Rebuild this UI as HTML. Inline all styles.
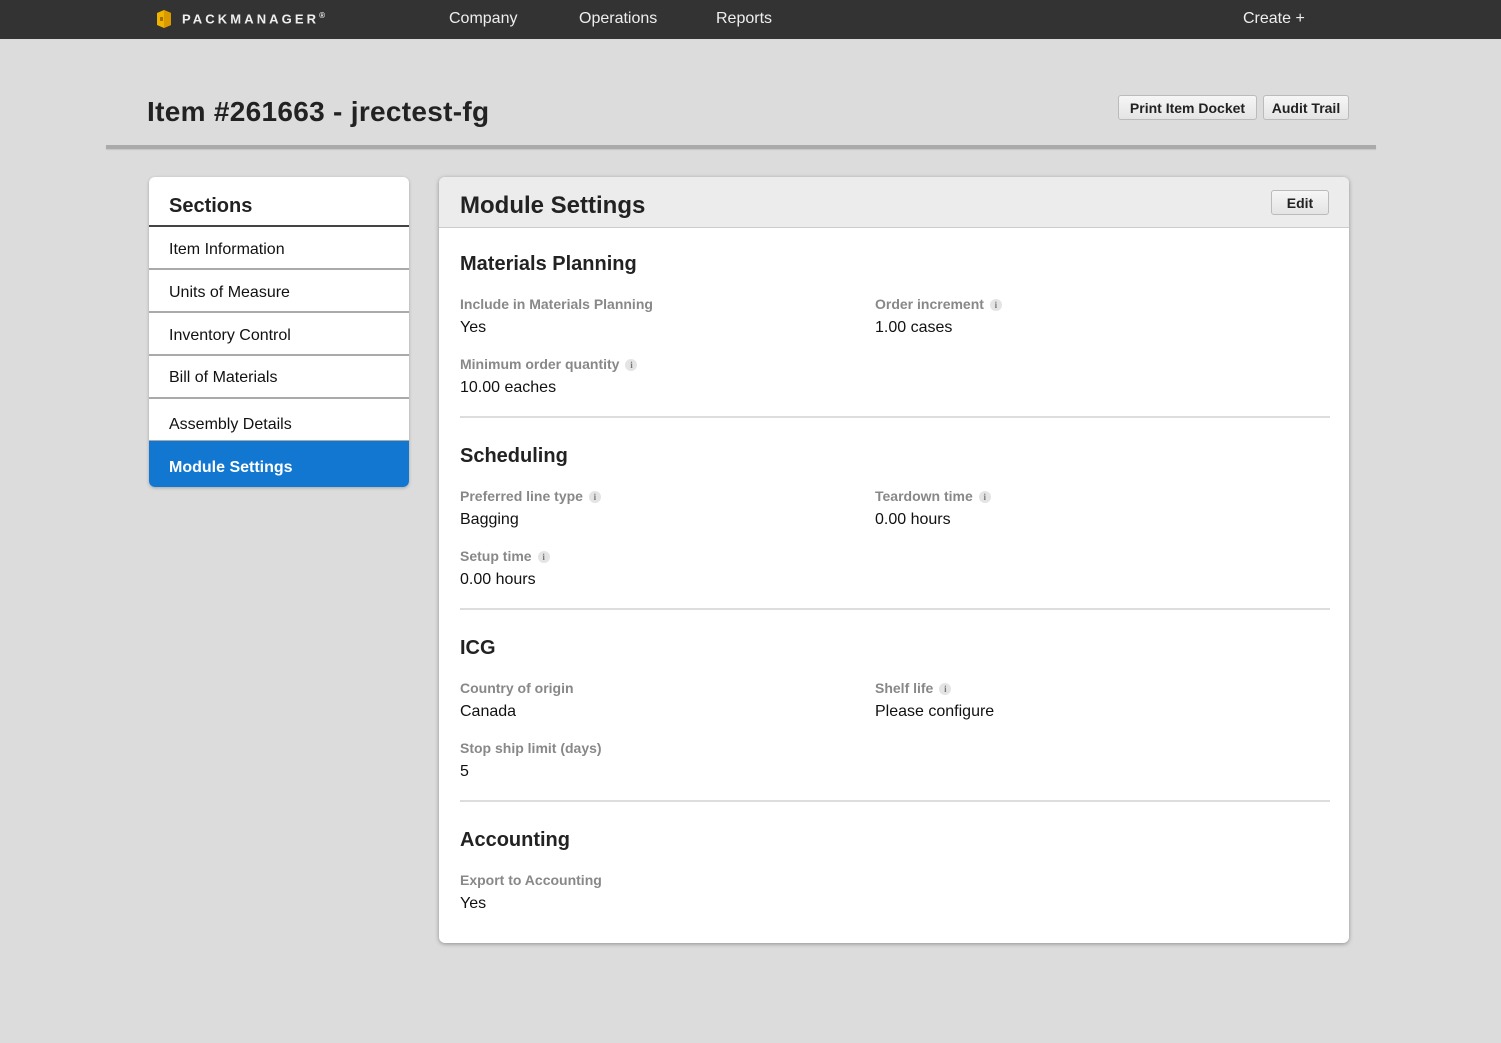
<!DOCTYPE html>
<html><head><meta charset="utf-8"><style>
*{box-sizing:border-box;margin:0;padding:0}
body{width:1501px;height:1043px;background:#dcdcdc;font-family:"Liberation Sans",Arial,sans-serif;position:relative;overflow:hidden;color:#111}
.nav{position:absolute;left:0;top:0;width:1501px;height:39px;background:#333}
.nav a{position:absolute;top:10px;color:#eee;font-size:16px}
.abs{position:absolute;white-space:nowrap}
.btn{position:absolute;height:25px;border:1px solid #bbb;border-radius:3px;background:linear-gradient(#f6f6f6,#e4e4e4);font-size:14px;font-weight:bold;color:#222;text-align:center;line-height:24px}
.side{position:absolute;left:149px;top:177px;width:260px;height:310px;background:#fff;border-radius:6px;overflow:hidden;box-shadow:0 1px 3px rgba(0,0,0,.25)}
.side .it{position:absolute;left:0;width:260px;font-size:16px;padding-left:20px}
.line{position:absolute;left:0;width:260px;height:2px;background:#aaa}
.main{position:absolute;left:439px;top:177px;width:910px;height:766px;background:#fff;border-radius:6px;overflow:hidden;box-shadow:0 1px 4px rgba(0,0,0,.35)}
.lab{position:absolute;font-size:14px;font-weight:bold;color:#888;white-space:nowrap}
.val{position:absolute;font-size:16px;color:#111;white-space:nowrap}
.h{position:absolute;left:21px;font-size:20px;font-weight:bold;color:#222}
.div{position:absolute;left:21px;width:870px;height:2px;background:#ddd}
.i{display:inline-block;width:12px;height:12px;border-radius:50%;background:#e4e4e4;color:#777;font-size:9px;font-family:"Liberation Serif",serif;font-weight:bold;text-align:center;line-height:12px;margin-left:6px;vertical-align:1px}
</style></head><body>
<div class="nav">
<svg style="position:absolute;left:154px;top:8px" width="20" height="22" viewBox="0 0 20 22"><path d="M3 5 L10 2 L17 5 L17 17 L10 20 L3 17Z" fill="#f0b400"/><path d="M10 2 L17 5 L17 17 L10 20Z" fill="#d99a00"/><rect x="6" y="9" width="3" height="4" fill="#a06f00"/></svg>
<div class="abs" style="left:182px;top:11px;color:#eee;font-weight:bold;font-size:13px;letter-spacing:3.1px">PACKMANAGER<sup style="font-size:8px;letter-spacing:0">®</sup></div>
<a style="left:449px">Company</a><a style="left:579px">Operations</a><a style="left:716px">Reports</a><a style="left:1243px">Create +</a>
</div>
<div class="abs" style="left:147px;top:96px;font-size:28px;font-weight:bold;color:#222;letter-spacing:0.3px">Item #261663 - jrectest-fg</div>
<div class="btn" style="left:1118px;top:95px;width:139px">Print Item Docket</div>
<div class="btn" style="left:1263px;top:95px;width:86px">Audit Trail</div>
<div class="abs" style="left:106px;top:145px;width:1270px;height:4px;background:#aaa;box-shadow:0 1px 1px rgba(0,0,0,.1)"></div>

<div class="side">
<div class="it" style="top:18px;font-size:20px;font-weight:bold;color:#222">Sections</div>
<div class="line" style="top:48px;background:#444"></div>
<div class="it" style="top:64px">Item Information</div>
<div class="line" style="top:91px"></div>
<div class="it" style="top:107px">Units of Measure</div>
<div class="line" style="top:134px"></div>
<div class="it" style="top:150px">Inventory Control</div>
<div class="line" style="top:177px"></div>
<div class="it" style="top:192px">Bill of Materials</div>
<div class="line" style="top:220px"></div>
<div class="it" style="top:239px">Assembly Details</div>
<div class="line" style="top:263px"></div>
<div style="position:absolute;left:0;top:264px;width:260px;height:46px;background:#1177d1"></div>
<div class="it" style="top:282px;color:#fff;font-weight:bold">Module Settings</div>
</div>

<div class="main">
<div style="position:absolute;left:0;top:0;width:910px;height:51px;background:#ececec;border-bottom:1px solid #ccc"></div>
<div class="h" style="top:15px;font-size:24px">Module Settings</div>
<div class="btn" style="left:832px;top:13px;width:58px;height:25px">Edit</div>

<div class="h" style="top:76px">Materials Planning</div>
<div class="lab" style="left:21px;top:119px">Include in Materials Planning</div>
<div class="val" style="left:21px;top:142px">Yes</div>
<div class="lab" style="left:436px;top:119px">Order increment<span class="i">i</span></div>
<div class="val" style="left:436px;top:142px">1.00 cases</div>
<div class="lab" style="left:21px;top:179px">Minimum order quantity<span class="i">i</span></div>
<div class="val" style="left:21px;top:202px">10.00 eaches</div>
<div class="div" style="top:239px"></div>

<div class="h" style="top:268px">Scheduling</div>
<div class="lab" style="left:21px;top:311px">Preferred line type<span class="i">i</span></div>
<div class="val" style="left:21px;top:334px">Bagging</div>
<div class="lab" style="left:436px;top:311px">Teardown time<span class="i">i</span></div>
<div class="val" style="left:436px;top:334px">0.00 hours</div>
<div class="lab" style="left:21px;top:371px">Setup time<span class="i">i</span></div>
<div class="val" style="left:21px;top:394px">0.00 hours</div>
<div class="div" style="top:431px"></div>

<div class="h" style="top:460px">ICG</div>
<div class="lab" style="left:21px;top:503px">Country of origin</div>
<div class="val" style="left:21px;top:526px">Canada</div>
<div class="lab" style="left:436px;top:503px">Shelf life<span class="i">i</span></div>
<div class="val" style="left:436px;top:526px">Please configure</div>
<div class="lab" style="left:21px;top:563px">Stop ship limit (days)</div>
<div class="val" style="left:21px;top:586px">5</div>
<div class="div" style="top:623px"></div>

<div class="h" style="top:652px">Accounting</div>
<div class="lab" style="left:21px;top:695px">Export to Accounting</div>
<div class="val" style="left:21px;top:718px">Yes</div>
</div>
</body></html>
